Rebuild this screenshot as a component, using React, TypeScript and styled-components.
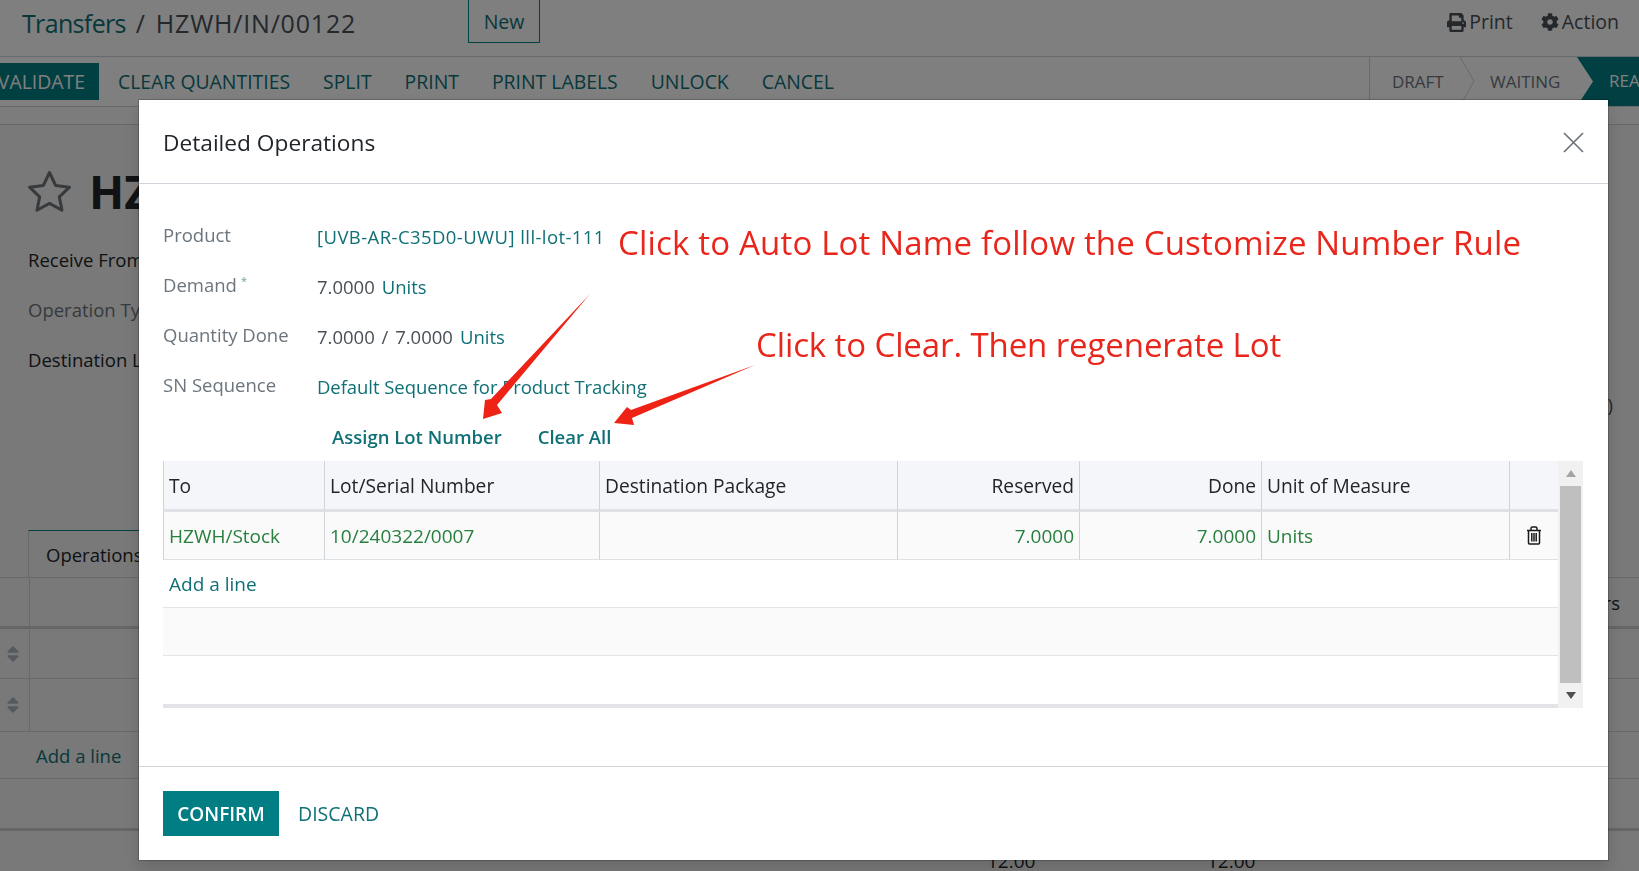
import { createGlobalStyle } from "styled-components";
import styled from "styled-components";
import { FaCog, FaPrint, FaSort } from "react-icons/fa";

const GlobalStyle = createGlobalStyle`
  html, body {
    margin: 0;
    padding: 0;
    height: 100%;
    overflow: hidden;
    font-family: "Open Sans", "Noto Sans", sans-serif;
    color: #212529;
  }
  * {
    box-sizing: border-box;
  }
`;

const TEAL = "#017e84";
const TEAL_TEXT = "#0f7076";

const Page = styled.div`
  width: 1639px;
  height: 871px;
  display: flex;
  flex-direction: column;
  background: #f2f2f2;
  overflow: hidden;
`;

const TopBar = styled.div`
  height: 57px;
  flex: none;
  display: flex;
  align-items: flex-start;
  background: #fff;
  border-bottom: 1px solid #ced4da;
  padding-left: 22px;
`;

const Breadcrumb = styled.div`
  width: 446px;
  padding-top: 6px;
  font-size: 25px;
  line-height: 34px;
  color: #495057;
  white-space: nowrap;
  letter-spacing: 0.8px;

  a {
    color: ${TEAL_TEXT};
    letter-spacing: -0.65px;
  }

  i {
    font-style: normal;
    margin: 0 10px;
  }
`;

const NewButton = styled.div`
  width: 72px;
  height: 43px;
  display: flex;
  align-items: center;
  justify-content: center;
  padding-top: 1px;
  font-size: 19.5px;
  color: ${TEAL_TEXT};
  border: 1px solid ${TEAL};
  border-top: none;
`;

const TopActions = styled.div`
  margin-left: auto;
  display: flex;
  gap: 28px;
  padding: 10px 20px 0 0;
  font-size: 19.5px;
  line-height: 24px;
  color: #495057;

  span {
    display: flex;
    align-items: center;
    gap: 3px;
  }
`;

const Toolbar = styled.div`
  height: 50px;
  flex: none;
  display: flex;
  align-items: flex-start;
  background: #fff;
  border-bottom: 1px solid #ced4da;
`;

const ToolButtons = styled.div`
  display: flex;
  align-items: center;
  gap: 33px;
  height: 43px;
  padding-top: 6px;
`;

const ToolButton = styled.div`
  font-size: 19.4px;
  font-weight: 500;
  height: 37px;
  line-height: 37px;
  white-space: nowrap;
  color: ${TEAL_TEXT};
`;

const ValidateButton = styled.div`
  width: 99px;
  height: 37px;
  margin-right: -14px;
  overflow: hidden;
  display: flex;
  justify-content: flex-end;
  padding-right: 14px;
  background: ${TEAL};
  color: #fff;
  font-size: 19.4px;
  font-weight: 500;
  line-height: 37px;
  white-space: nowrap;
`;

const StatusBar = styled.div`
  margin-left: auto;
  width: 270px;
  height: 49px;
  display: flex;
  align-items: center;
  border-left: 1px solid #ced4da;
  font-size: 17px;
  color: #6c757d;
  position: relative;
  overflow: hidden;
`;

const StatusItem = styled.div<{ $width: number; $pad: number }>`
  width: ${({ $width }) => $width}px;
  padding-left: ${({ $pad }) => $pad}px;
  white-space: nowrap;
  flex: none;
`;

const Chevron = styled.svg`
  position: absolute;
  left: 89px;
  top: 0;
  width: 17px;
  height: 49px;
`;

const ReadyStep = styled.div`
  flex: none;
  width: 80px;
  height: 49px;
  margin-left: -1px;
  padding: 12px 0 0 32px;
  background: ${TEAL};
  color: #fff;
  white-space: nowrap;
  clip-path: polygon(0 0, 100% 0, 100% 100%, 0 100%, 16px 50%);
`;

const SubBar = styled.div`
  height: 18px;
  flex: none;
  background: #f9f9f9;
  border-bottom: 1px solid #ced4da;
`;

const Sheet = styled.div`
  flex: 1;
  padding: 45px 0 0 28px;
  position: relative;
`;

const TitleRow = styled.div`
  display: flex;
  align-items: center;
  gap: 17px;
  height: 41px;
  margin-left: -1px;
  font-size: 46px;
  font-weight: 700;
  color: #212529;
`;

const StarIcon = styled.svg`
  width: 45px;
  height: 42px;
  fill: none;
  stroke: #6f757b;
  stroke-width: 3;
  stroke-linejoin: round;
`;

const SheetField = styled.div<{ $muted?: boolean }>`
  height: 50px;
  line-height: 50px;
  font-size: 18.5px;
  font-weight: ${({ $muted }) => ($muted ? 400 : 500)};
  color: ${({ $muted }) => ($muted ? "#6c757d" : "#212529")};
  white-space: nowrap;
`;

const Fields = styled.div`
  margin-top: 24px;
  height: 295px;
`;

const Tabs = styled.div`
  height: 47px;
  display: flex;
`;

const Tab = styled.div`
  width: 300px;
  padding: 11px 0 0 17px;
  font-size: 18.5px;
  border-top: 1px solid ${TEAL};
  border-left: 1px solid #ced4da;
`;

const BackRows = styled.div`
  margin-left: -28px;
  border-top: 1px solid #ced4da;
`;

const BackRow = styled.div<{ $height: number; $thick?: boolean }>`
  height: ${({ $height }) => $height}px;
  display: flex;
  align-items: center;
  border-bottom: ${({ $thick }) => ($thick ? "3px solid #c8ccd0" : "1px solid #ced4da")};
  font-size: 18.5px;
  color: ${TEAL_TEXT};
`;

const Handle = styled.div`
  width: 30px;
  height: 100%;
  flex: none;
  display: flex;
  align-items: center;
  justify-content: center;
  padding-right: 4px;
  border-right: 1px solid #ced4da;
  color: #adb5bd;
  font-size: 20px;
`;

const AddLine = styled.div`
  padding-left: 36px;
`;

const RightEdge = styled.div`
  position: absolute;
  right: 26px;
  top: 267px;
  font-size: 18.5px;
  color: #495057;
`;

const RightHead = styled(RightEdge)`
  top: 465px;
  right: 19px;
  color: #212529;
`;

const BottomValue = styled.div<{ $left: number }>`
  position: absolute;
  top: 723px;
  left: ${({ $left }) => $left}px;
  font-size: 19px;
  color: #212529;
`;

const Backdrop = styled.div`
  position: fixed;
  inset: 0;
  background: rgba(0, 0, 0, 0.5);
`;

const Modal = styled.div`
  position: fixed;
  left: 139px;
  top: 100px;
  width: 1469px;
  height: 760px;
  display: flex;
  flex-direction: column;
  background: #fff;
  box-shadow: 0 0 0 1px rgba(0, 0, 0, 0.2), 0 8px 16px rgba(0, 0, 0, 0.15);
`;

const ModalHeader = styled.div`
  height: 84px;
  flex: none;
  display: flex;
  align-items: center;
  justify-content: space-between;
  padding: 2px 24px 0 24px;
  border-bottom: 1px solid #ced4da;
`;

const ModalTitle = styled.div`
  font-size: 22.7px;
  font-weight: 500;
  color: #212529;
`;

const CloseIcon = styled.svg`
  width: 21px;
  height: 21px;
  stroke: #6c757d;
  stroke-width: 1.7;
`;

const ModalBody = styled.div`
  flex: 1;
  padding: 27px 24px 0 24px;
`;

const FormRow = styled.div`
  display: flex;
  height: 50px;
  align-items: center;
  font-size: 18.5px;
  white-space: nowrap;
`;

const FormLabel = styled.div`
  width: 154px;
  flex: none;
  color: #6c757d;
  margin-top: -3px;

  sup {
    color: #6f9ea1;
    font-size: 11px;
    margin-left: 4px;
  }
`;

const FormValue = styled.div`
  display: flex;
  gap: 7px;
  color: #495057;
  margin-top: 1px;

  i {
    font-style: normal;
    margin: 0 2px;
  }
`;

const Link = styled.span<{ $spacing?: number }>`
  color: ${TEAL_TEXT};
  letter-spacing: ${({ $spacing }) => $spacing ?? 0}px;
`;

const LotActions = styled.div`
  display: flex;
  gap: 36px;
  padding: 0 0 0 169px;
  height: 50px;
  align-items: center;
  font-size: 18.5px;
  font-weight: 600;
  color: ${TEAL_TEXT};
`;

const TableWrap = styled.div`
  display: flex;
  height: 247px;
`;

const Table = styled.table`
  width: 1395px;
  flex: none;
  table-layout: fixed;
  border-collapse: separate;
  border-spacing: 0;
  font-size: 19px;
  height: 247px;
`;

const Th = styled.th<{ $right?: boolean }>`
  height: 51px;
  padding: 0 5px 0 5px;
  background: #f4f6fa;
  font-size: 19.2px;
  font-weight: 500;
  color: #212529;
  text-align: ${({ $right }) => ($right ? "right" : "left")};
  border-left: 1px solid #ced4da;
  border-bottom: 3px solid #dee2e6;
  white-space: nowrap;
`;

const Td = styled.td<{ $right?: boolean }>`
  height: 48px;
  padding: 0 5px 0 5px;
  background: #fafafa;
  color: #28803f;
  text-align: ${({ $right }) => ($right ? "right" : "left")};
  border-left: 1px solid #ced4da;
  border-bottom: 1px solid #dee2e6;
  white-space: nowrap;
`;

const WideTd = styled.td<{ $shade?: boolean; $last?: boolean; $height: number }>`
  height: ${({ $height }) => $height}px;
  padding: 0 6px;
  color: ${TEAL_TEXT};
  background: ${({ $shade }) => ($shade ? "#fafafa" : "#fff")};
  border-bottom: ${({ $last }) => ($last ? "4px" : "1px")} solid #e2e4e8;
`;

const TrashIcon = styled.svg`
  display: block;
  margin: 0 auto;
  width: 16px;
  height: 19px;
  fill: none;
  stroke: #1a1a1a;
  stroke-width: 1.5;
`;

const Scrollbar = styled.div`
  width: 25px;
  flex: none;
  display: flex;
  flex-direction: column;
  align-items: center;
  background: #f1f1f1;
`;

const ScrollArrow = styled.div<{ $down?: boolean }>`
  height: 25px;
  flex: none;
  display: flex;
  align-items: center;
  justify-content: center;

  &::before {
    content: "";
    border-left: 5.5px solid transparent;
    border-right: 5.5px solid transparent;
    ${({ $down }) =>
      $down
        ? "border-top: 7px solid #505050;"
        : "border-bottom: 7px solid #a3a3a3;"}
  }
`;

const ScrollThumb = styled.div`
  width: 21px;
  flex: 1;
  background: #bfbfbf;
`;

const ModalFooter = styled.div`
  height: 94px;
  flex: none;
  display: flex;
  align-items: flex-start;
  gap: 19px;
  padding: 24px 0 0 24px;
  border-top: 1px solid #ced4da;
`;

const ConfirmButton = styled.div`
  width: 116px;
  height: 45px;
  display: flex;
  align-items: center;
  justify-content: center;
  background: ${TEAL};
  color: #fff;
  font-size: 19px;
  font-weight: 600;
`;

const DiscardButton = styled.div`
  height: 45px;
  display: flex;
  align-items: center;
  color: ${TEAL_TEXT};
  font-size: 19.5px;
  font-weight: 500;
`;

const Annotation = styled.div<{ $left: number; $top: number; $spacing: number }>`
  position: fixed;
  left: ${({ $left }) => $left}px;
  top: ${({ $top }) => $top}px;
  font-size: 33px;
  line-height: 44px;
  letter-spacing: ${({ $spacing }) => $spacing}px;
  color: #e8261c;
  white-space: nowrap;
`;

const ArrowLayer = styled.svg`
  position: fixed;
  left: 0;
  top: 0;
  width: 1639px;
  height: 871px;
  pointer-events: none;
  fill: #ee2316;
`;

const COLUMNS = [161, 275, 298, 182, 182, 248, 49];

export default function App() {
  return (
    <>
      <GlobalStyle />
      <Page>
        <TopBar>
          <Breadcrumb>
            <a>Transfers</a>
            <i>/</i>HZWH/IN/00122
          </Breadcrumb>
          <NewButton>New</NewButton>
          <TopActions>
            <span>
              <FaPrint size={19} />
              Print
            </span>
            <span>
              <FaCog size={18} />
              Action
            </span>
          </TopActions>
        </TopBar>
        <Toolbar>
          <ToolButtons>
            <ValidateButton>VALIDATE</ValidateButton>
            <ToolButton>CLEAR QUANTITIES</ToolButton>
            <ToolButton>SPLIT</ToolButton>
            <ToolButton>PRINT</ToolButton>
            <ToolButton>PRINT LABELS</ToolButton>
            <ToolButton>UNLOCK</ToolButton>
            <ToolButton>CANCEL</ToolButton>
          </ToolButtons>
          <StatusBar>
            <StatusItem $width={120} $pad={22}>
              DRAFT
            </StatusItem>
            <Chevron viewBox="0 0 17 49" fill="none" stroke="#ced4da">
              <path d="M1 0 L15 24 L1 49" />
            </Chevron>
            <StatusItem $width={88} $pad={0}>
              WAITING
            </StatusItem>
            <ReadyStep>READY</ReadyStep>
          </StatusBar>
        </Toolbar>
        <SubBar />
        <Sheet>
          <TitleRow>
            <StarIcon viewBox="0 0 45 42">
              <polygon points="22.5,2.5 28.6,15.4 42.5,17.2 32.3,26.8 35,40.2 22.5,33.4 10,40.2 12.7,26.8 2.5,17.2 16.4,15.4" />
            </StarIcon>
            HZWH/IN/00122
          </TitleRow>
          <Fields>
            <SheetField>Receive From</SheetField>
            <SheetField $muted>Operation Type</SheetField>
            <SheetField>Destination Location</SheetField>
          </Fields>
          <Tabs>
            <Tab>Operations</Tab>
          </Tabs>
          <BackRows>
            <BackRow $height={51} $thick>
              <Handle />
            </BackRow>
            <BackRow $height={50}>
              <Handle>
                <FaSort />
              </Handle>
            </BackRow>
            <BackRow $height={53}>
              <Handle>
                <FaSort />
              </Handle>
            </BackRow>
            <BackRow $height={47}>
              <AddLine>Add a line</AddLine>
            </BackRow>
            <BackRow $height={52} $thick />
          </BackRows>
          <RightEdge>(0)</RightEdge>
          <RightHead>Serial Numbers</RightHead>
          <BottomValue $left={987}>12.00</BottomValue>
          <BottomValue $left={1207}>12.00</BottomValue>
        </Sheet>
      </Page>
      <Backdrop />
      <Modal>
        <ModalHeader>
          <ModalTitle>Detailed Operations</ModalTitle>
          <CloseIcon viewBox="0 0 21 21">
            <path d="M1 1 L20 20 M20 1 L1 20" />
          </CloseIcon>
        </ModalHeader>
        <ModalBody>
          <FormRow>
            <FormLabel>Product</FormLabel>
            <FormValue>
              <Link $spacing={0.42}>[UVB-AR-C35D0-UWU] lll-lot-111</Link>
            </FormValue>
          </FormRow>
          <FormRow>
            <FormLabel>
              Demand<sup>*</sup>
            </FormLabel>
            <FormValue>
              7.0000 <Link>Units</Link>
            </FormValue>
          </FormRow>
          <FormRow>
            <FormLabel>Quantity Done</FormLabel>
            <FormValue>
              <span>
                7.0000 <i>/</i> 7.0000
              </span>
              <Link>Units</Link>
            </FormValue>
          </FormRow>
          <FormRow>
            <FormLabel>SN Sequence</FormLabel>
            <FormValue>
              <Link $spacing={-0.06}>Default Sequence for Product Tracking</Link>
            </FormValue>
          </FormRow>
          <LotActions>
            <span>Assign Lot Number</span>
            <span>Clear All</span>
          </LotActions>
          <TableWrap>
            <Table>
              <colgroup>
                {COLUMNS.map((width, i) => (
                  <col key={i} style={{ width }} />
                ))}
              </colgroup>
              <thead>
                <tr>
                  <Th>To</Th>
                  <Th>Lot/Serial Number</Th>
                  <Th>Destination Package</Th>
                  <Th $right>Reserved</Th>
                  <Th $right>Done</Th>
                  <Th>Unit of Measure</Th>
                  <Th />
                </tr>
              </thead>
              <tbody>
                <tr>
                  <Td>HZWH/Stock</Td>
                  <Td>10/240322/0007</Td>
                  <Td />
                  <Td $right>7.0000</Td>
                  <Td $right>7.0000</Td>
                  <Td>Units</Td>
                  <Td>
                    <TrashIcon viewBox="0 0 16 19">
                      <path d="M1 4.5 H15 M2.5 4.5 V17 Q2.5 18 3.5 18 H12.5 Q13.5 18 13.5 17 V4.5 M5 4.5 V2.5 Q5 1 6.5 1 H9.5 Q11 1 11 2.5 V4.5 M5.8 7 V15.5 M8 7 V15.5 M10.2 7 V15.5" />
                    </TrashIcon>
                  </Td>
                </tr>
                <tr>
                  <WideTd colSpan={7} $height={48}>
                    Add a line
                  </WideTd>
                </tr>
                <tr>
                  <WideTd colSpan={7} $height={48} $shade />
                </tr>
                <tr>
                  <WideTd colSpan={7} $height={52} $last />
                </tr>
              </tbody>
            </Table>
            <Scrollbar>
              <ScrollArrow />
              <ScrollThumb />
              <ScrollArrow $down />
            </Scrollbar>
          </TableWrap>
        </ModalBody>
        <ModalFooter>
          <ConfirmButton>CONFIRM</ConfirmButton>
          <DiscardButton>DISCARD</DiscardButton>
        </ModalFooter>
      </Modal>
      <Annotation $left={618} $top={221} $spacing={0.18}>
        Click to Auto Lot Name follow the Customize Number Rule
      </Annotation>
      <Annotation $left={756} $top={323} $spacing={-0.1}>
        Click to Clear. Then regenerate Lot
      </Annotation>
      <ArrowLayer viewBox="0 0 1639 871">
        <polygon points="590,294 497,405 502,413 483,419 485,400 491,399" />
        <polygon points="755,365 632,418 634,425 614,423 627,407 631,410" />
      </ArrowLayer>
    </>
  );
}
